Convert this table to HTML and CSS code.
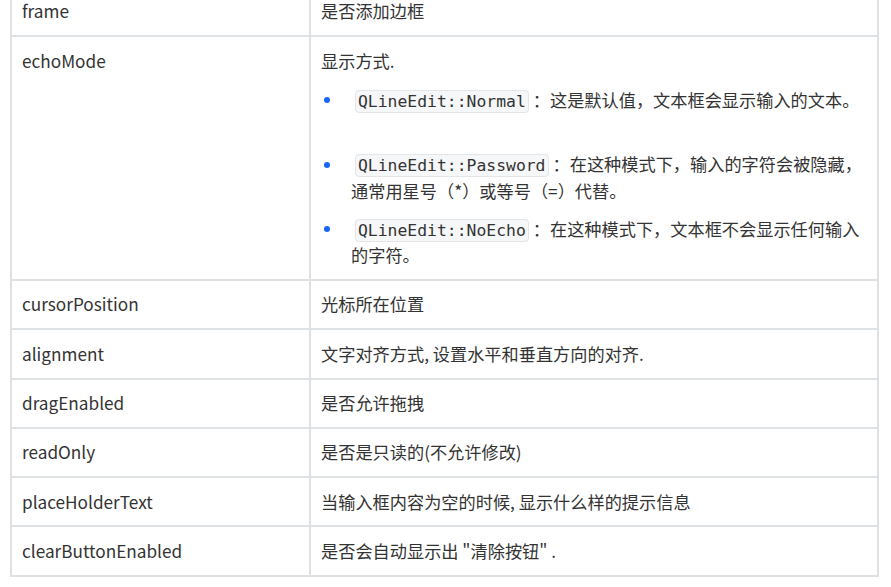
FILE: index.html
```html
<!DOCTYPE html>
<html lang="zh-CN">
<head>
<meta charset="utf-8">
<title>QLineEdit 属性</title>
<link rel="stylesheet" href="styles.css">
</head>
<body>
<table class="props">
  <tbody>
    <tr><td class="name">frame</td><td class="desc">是否添加边框</td></tr>
    <tr>
      <td class="name">echoMode</td>
      <td class="desc">
        <p class="lead">显示方式.</p>
        <ul class="modes">
          <li><span class="dot-cell"><span class="dot"></span></span><div class="item"><code>QLineEdit::Normal</code>：这是默认值，文本框会显示输入的文本。<br>&nbsp;</div></li>
          <li><span class="dot-cell"><span class="dot"></span></span><div class="item"><code>QLineEdit::Password</code>：在这种模式下，输入的字符会被隐藏，通常用星号（*）或等号（=）代替。</div></li>
          <li><span class="dot-cell"><span class="dot"></span></span><div class="item"><code>QLineEdit::NoEcho</code>：在这种模式下，文本框不会显示任何输入的字符。</div></li>
        </ul>
      </td>
    </tr>
    <tr><td class="name">cursorPosition</td><td class="desc">光标所在位置</td></tr>
    <tr><td class="name">alignment</td><td class="desc">文字对齐方式, 设置水平和垂直方向的对齐.</td></tr>
    <tr><td class="name">dragEnabled</td><td class="desc">是否允许拖拽</td></tr>
    <tr><td class="name">readOnly</td><td class="desc">是否是只读的(不允许修改)</td></tr>
    <tr><td class="name">placeHolderText</td><td class="desc">当输入框内容为空的时候, 显示什么样的提示信息</td></tr>
    <tr><td class="name">clearButtonEnabled</td><td class="desc">是否会自动显示出 "清除按钮" .</td></tr>
  </tbody>
</table>
</body>
</html>
```
FILE: styles.css
```css
html, body {
  margin: 0;
  padding: 0;
  background: #ffffff;
}

body {
  font-family: "Noto Sans CJK SC", "Noto Sans", sans-serif;
  font-size: 17.2px;
  line-height: 26.4px;
  color: #333333;
  overflow: hidden;
}

.props {
  margin: -14px 0 0 10px;
  width: 869px;
  border-collapse: separate;
  border-spacing: 0;
  table-layout: fixed;
}

.props td {
  box-sizing: border-box;
  padding: 10.45px 10px;
  border-left: 2px solid #dfe2e5;
  border-bottom: 2px solid #dfe2e5;
  vertical-align: middle;
  text-align: left;
}

.props tr:first-child td {
  border-top: 2px solid #dfe2e5;
}

.props td.name {
  width: 299px;
}

.props td.desc {
  border-right: 2px solid #dfe2e5;
}

.props tr:has(.modes) td {
  vertical-align: top;
}

.props tr:has(.modes) td.desc {
  padding-top: 10.8px;
}

.props tr:has(.modes) td.name {
  padding-top: 10.8px;
}

.lead {
  margin: 0;
}

.modes {
  list-style: none;
  margin: 12.8px 0 0 0;
  padding: 0;
}

.modes li {
  display: grid;
  grid-template-columns: 30px 1fr;
  margin: 0;
}

.modes li + li {
  margin-top: 11.4px;
}

.dot-cell {
  height: 26.4px;
  display: flex;
  align-items: center;
}

.dot {
  width: 6px;
  height: 6px;
  margin-left: 3px;
  border-radius: 50%;
  background: #1a66f0;
}

.item code {
  font-family: "DejaVu Sans Mono", "Liberation Mono", monospace;
  font-size: 16.4px;
  line-height: 19px;
  color: #333333;
  background: #f6f7f9;
  border: 1px solid #e3e5e8;
  border-radius: 4px;
  padding: 1px 2px;
  margin: 0 4px 0 4px;
}
```
